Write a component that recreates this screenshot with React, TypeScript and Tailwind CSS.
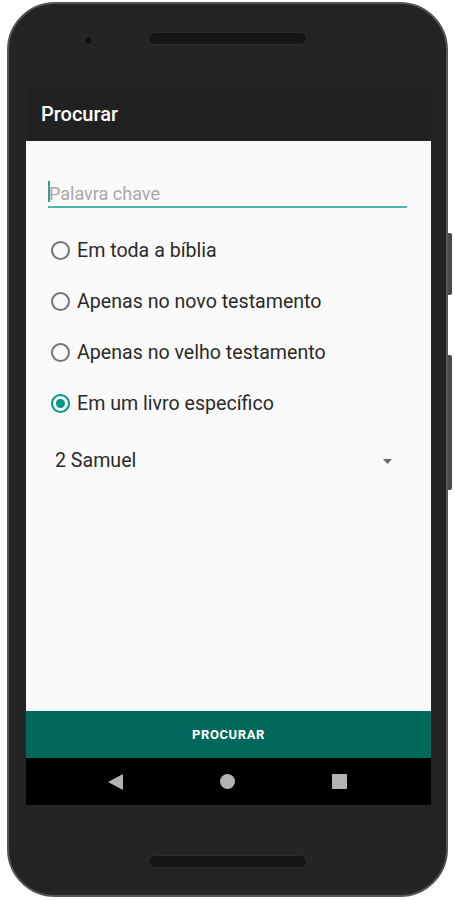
import React from "react";

function Radio({ checked }: { checked?: boolean }) {
  return (
    <span
      className={
        "flex h-[19px] w-[19px] shrink-0 items-center justify-center rounded-full border-2 " +
        (checked ? "border-[#009688]" : "border-[#757575]")
      }
    >
      {checked ? <span className="h-[9px] w-[9px] rounded-full bg-[#009688]" /> : null}
    </span>
  );
}

function RadioRow({ label, checked }: { label: string; checked?: boolean }) {
  return (
    <div className="flex h-[51px] items-center pl-[3px]">
      <Radio checked={checked} />
      <span className="ml-[7px] text-[19.6px] leading-[24px] text-[#2a2a2a]">{label}</span>
    </div>
  );
}

export default function App() {
  return (
    <div
      className="relative h-[900px] w-[455px] overflow-hidden bg-white"
      style={{ fontFamily: "Roboto, 'Noto Sans', 'Liberation Sans', sans-serif" }}
    >
      <div className="relative ml-[7px] mt-[2px] flex h-[895px] w-[441px] flex-col rounded-[48px] border-2 border-[#555] bg-[#242424]">
        {/* side buttons */}
        <span className="absolute right-[-6px] top-[229px] h-[62px] w-[4px] rounded-r-[2px] bg-[#4a4a4a]" />
        <span className="absolute right-[-6px] top-[351px] h-[135px] w-[4px] rounded-r-[2px] bg-[#4a4a4a]" />

        {/* top bezel */}
        <div className="flex h-[83px] shrink-0 items-start pt-[28px]">
          <div className="ml-[76px] mt-[5px] h-[7px] w-[7px] rounded-full bg-[#111] ring-1 ring-[#2e2e2e]" />
          <div className="ml-[56px] h-[13px] w-[159px] rounded-full border border-[#2c2c2c] bg-[#161616]" />
        </div>

        {/* screen */}
        <div className="ml-[17px] flex h-[718px] w-[405px] shrink-0 flex-col">
          <div className="flex h-[54px] shrink-0 items-center bg-[#212121] pl-[15px]">
            <span className="text-[20px] font-medium leading-[24px] text-white">Procurar</span>
          </div>

          <div className="flex flex-1 flex-col bg-[#fafafa] pl-[22px] pr-[24px] pt-[41px]">
            <div className="flex h-[26px] items-start border-b-2 border-[#4db6ac]">
              <span className="mt-[-1px] h-[21px] w-[2px] bg-[#26a69a]" />
              <span className="ml-[-1px] text-[18px] leading-[24px] text-[#a8a8a8]">Palavra chave</span>
            </div>

            <div className="mt-[17px] flex flex-col">
              <RadioRow label="Em toda a bíblia" />
              <RadioRow label="Apenas no novo testamento" />
              <RadioRow label="Apenas no velho testamento" />
              <RadioRow label="Em um livro específico" checked />
            </div>

            <div className="mt-[8px] flex h-[48px] items-center justify-between pl-[7px] pr-[15px]">
              <span className="text-[19.6px] leading-[24px] text-[#2a2a2a]">2 Samuel</span>
              <svg width="9" height="5" viewBox="0 0 9 5">
                <polygon points="0,0 9,0 4.5,5" fill="#6b6b6b" />
              </svg>
            </div>
          </div>

          <div className="flex h-[47px] shrink-0 items-center justify-center bg-[#00695c]">
            <span className="text-[13px] font-bold leading-[16px] tracking-[0.6px] text-white">PROCURAR</span>
          </div>

          <div className="flex h-[47px] shrink-0 items-center justify-center gap-[97px] bg-black pr-[3px]">
            <svg width="15" height="16" viewBox="0 0 15 16">
              <polygon points="15,0 15,16 0,8" fill="#b3b3b3" />
            </svg>
            <span className="h-[15px] w-[15px] rounded-full bg-[#b3b3b3]" />
            <span className="h-[15px] w-[15px] rounded-[1px] bg-[#b3b3b3]" />
          </div>
        </div>

        {/* bottom bezel */}
        <div className="flex flex-1 items-start pt-[50px]">
          <div className="ml-[139px] h-[13px] w-[159px] rounded-full border border-[#2c2c2c] bg-[#161616]" />
        </div>
      </div>
    </div>
  );
}
